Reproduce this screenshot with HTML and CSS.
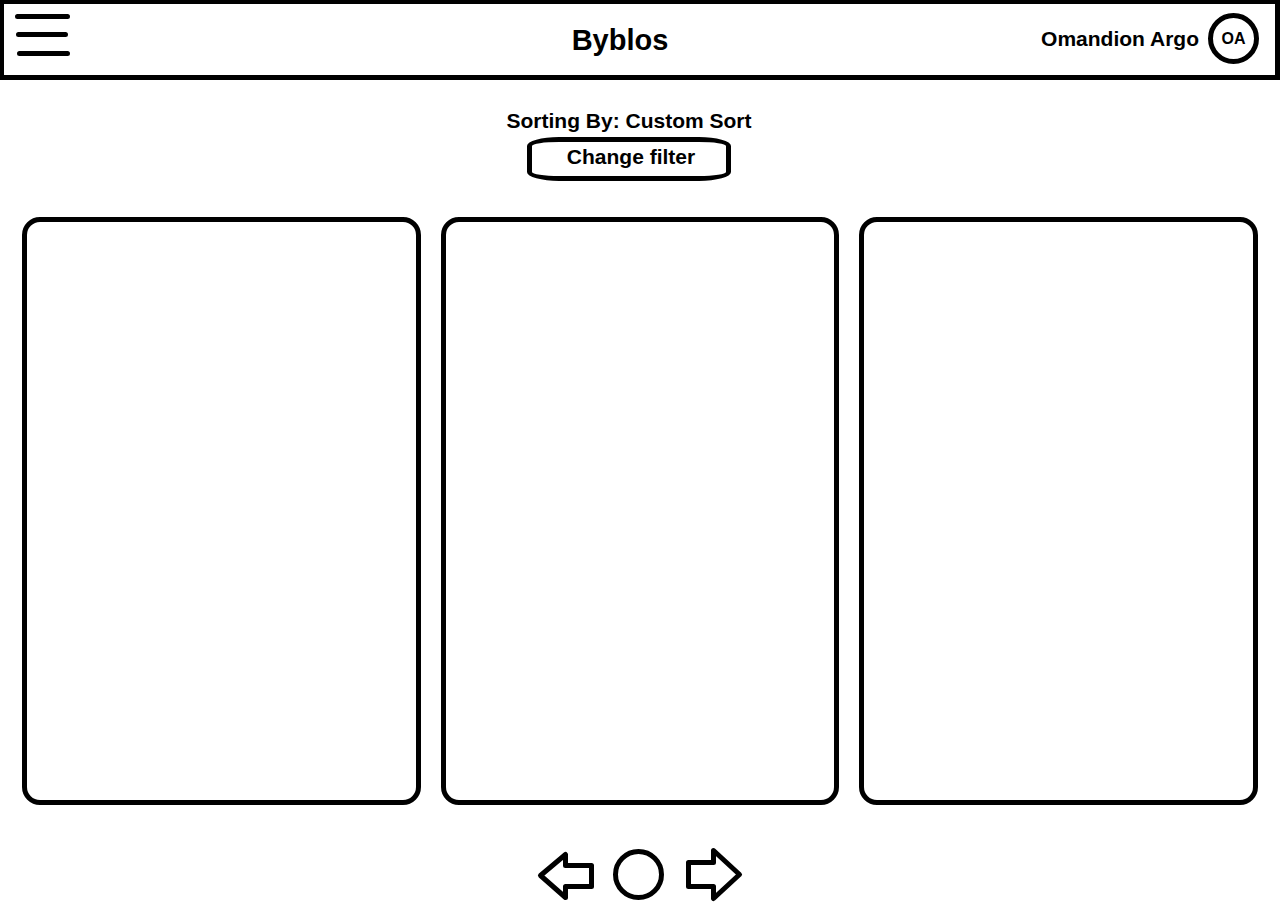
FILE: index.html
```html
<!DOCTYPE html>
<html lang="en">
<head>
<meta charset="utf-8">
<meta name="viewport" content="width=device-width, initial-scale=1">
<title>Byblos</title>
<link rel="stylesheet" href="styles.css">
</head>
<body>
<header class="topbar">
  <button class="icon-button menu" type="button" aria-label="Menu">
    <svg class="icon" width="56" height="44" viewBox="15 13 56 44" aria-hidden="true">
      <path d="M17.500 16.500H67.500M18.500 34.500H65.500M19.500 53.500H67.500"/>
    </svg>
  </button>
  <h1 class="title">Byblos</h1>
  <div class="user">
    <span class="user-name">Omandion Argo</span>
    <span class="avatar">OA</span>
  </div>
</header>
<main class="content">
  <section class="sorting">
    <p class="sorting-label">Sorting By: Custom Sort</p>
    <button class="filter" type="button">Change filter</button>
  </section>
  <section class="cards">
    <article class="card"></article>
    <article class="card"></article>
    <article class="card"></article>
  </section>
</main>
<nav class="pager" aria-label="Pages">
  <button class="icon-button" type="button" aria-label="Previous">
    <svg class="icon" width="56" height="53" viewBox="537 848 56 53" aria-hidden="true">
      <path d="M540.500 875.500L565.500 854.500V865.500H591.500V886.500H565.500V897.500Z"/>
    </svg>
  </button>
  <button class="icon-button" type="button" aria-label="Current">
    <svg class="icon" width="52" height="53" viewBox="613 848 52 53" aria-hidden="true">
      <circle cx="638.500" cy="874.500" r="23"/>
    </svg>
  </button>
  <button class="icon-button" type="button" aria-label="Next">
    <svg class="icon" width="58" height="53" viewBox="685 848 58 53" aria-hidden="true">
      <path d="M688.500 862.500H713.500V850.500L739.500 874.500L713.500 898.500V886.500H688.500Z"/>
    </svg>
  </button>
</nav>
</body>
</html>
```
FILE: styles.css
```css
* {
  box-sizing: border-box;
}

body {
  display: flex;
  flex-direction: column;
  min-height: 100vh;
  margin: 0;
  background: #fff;
  color: #000;
  font: bold 21px/24px "Liberation Sans", Arial, sans-serif;
}

.topbar {
  display: grid;
  grid-template-columns: 1fr auto 1fr;
  align-items: center;
  padding: 9px 16px 11px 11px;
  border: solid #000;
  border-width: 4px 5px 5px 4px;
}

.icon-button {
  display: block;
  padding: 0;
  border: 0;
  background: none;
  cursor: pointer;
}

.menu {
  align-self: start;
  justify-self: start;
}

.icon {
  display: block;
  overflow: visible;
  fill: none;
  stroke: #000;
  stroke-width: 5;
  stroke-linecap: round;
  stroke-linejoin: round;
}

.title {
  margin: 0;
  padding: 2px 34px 0 0;
  font-size: 29px;
  line-height: 32px;
}

.user {
  display: flex;
  align-items: center;
  justify-content: flex-end;
  gap: 9px;
}

.avatar {
  display: flex;
  align-items: center;
  justify-content: center;
  width: 51px;
  height: 51px;
  border: 5px solid #000;
  border-radius: 50%;
  font-size: 16px;
}

.content {
  display: flex;
  flex: 1;
  flex-direction: column;
  gap: 36px;
  padding: 29px 22px 0;
}

.sorting {
  display: flex;
  flex-direction: column;
  align-items: center;
  gap: 4px;
  padding-right: 22px;
}

.sorting-label {
  margin: 0;
}

.filter {
  padding: 3px 31px 7px 35px;
  border: 5px solid #000;
  border-radius: 32px / 9px;
  background: #fff;
  color: inherit;
  font: inherit;
  cursor: pointer;
}

.cards {
  display: grid;
  flex: 1;
  grid-template-columns: repeat(3, 1fr);
  gap: 20px;
  min-height: 320px;
}

.card {
  border: 5px solid #000;
  border-radius: 18px;
}

.pager {
  display: flex;
  justify-content: center;
  gap: 20px;
  padding: 43px 0 19px;
}
```
